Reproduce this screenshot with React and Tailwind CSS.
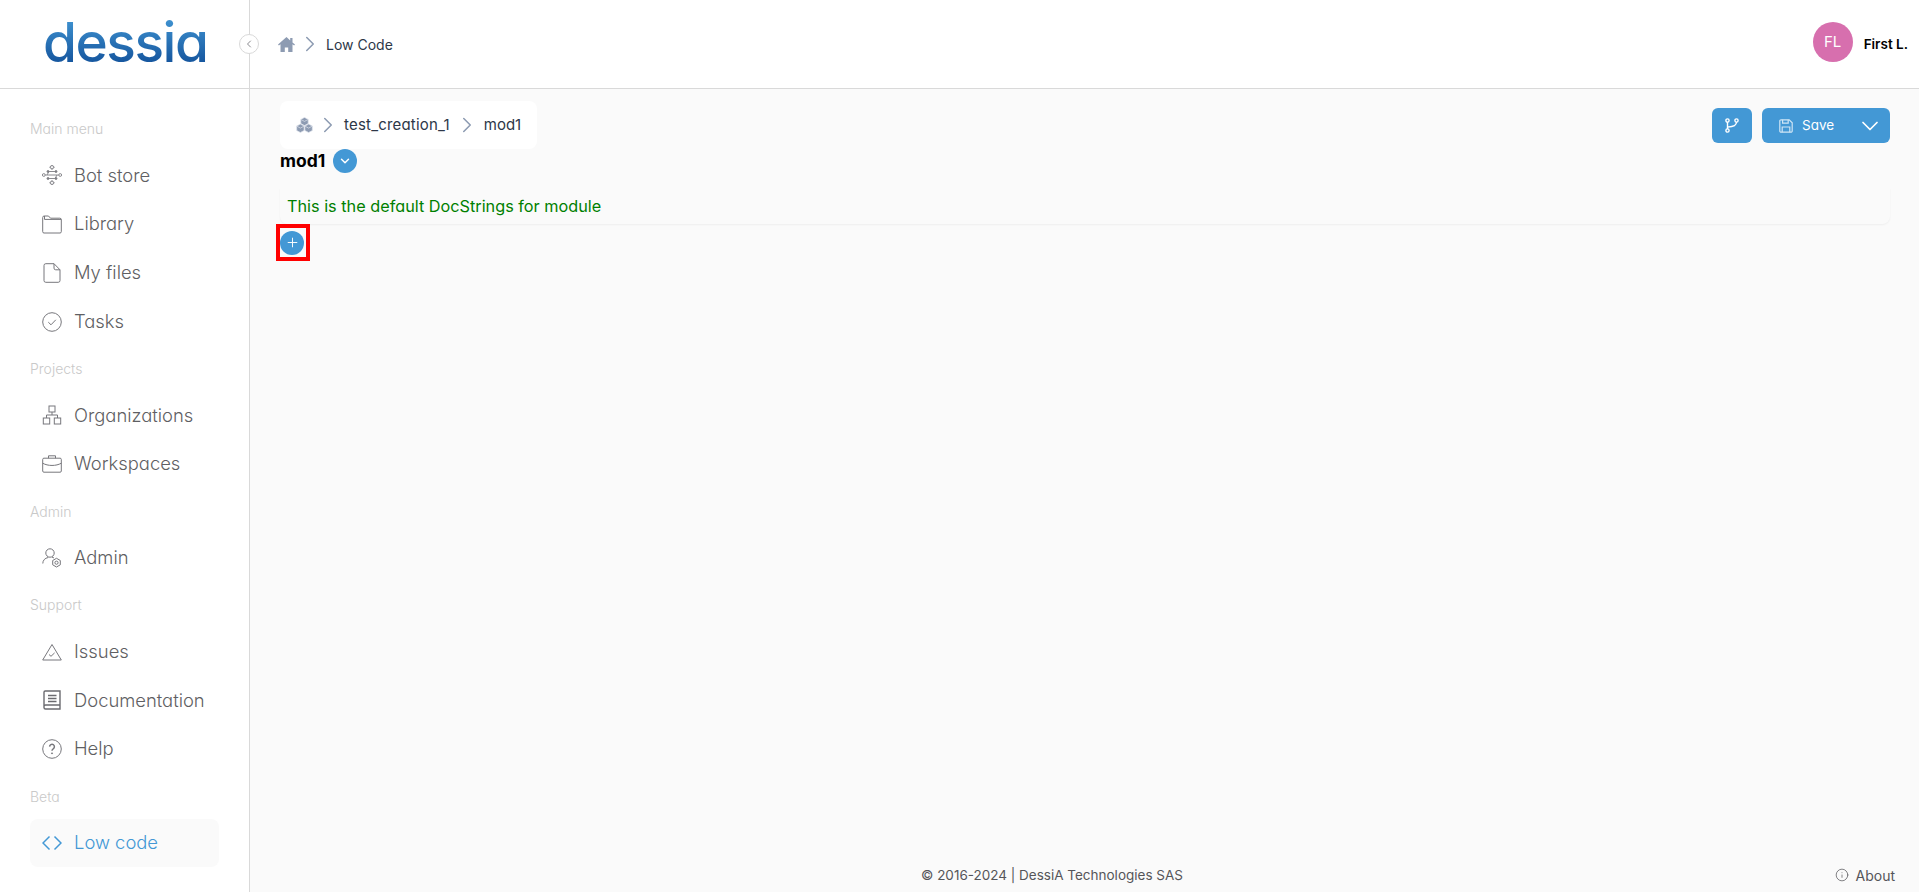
import { ChevronLeft, ChevronRight, ChevronDown, Plus, Info } from 'lucide-react';

// sidebar icons, all on a 20x20 box
const BotStore = () => (
    <svg width="20" height="20" viewBox="0 0 20 20" fill="none" stroke="#8a8a8f" strokeWidth="1">
        <rect x="8.5" y="0.7" width="3" height="3" transform="rotate(45 10 2.2)" />
        <rect x="8.5" y="16.3" width="3" height="3" transform="rotate(45 10 17.8)" />
        <circle cx="1.8" cy="10" r="1.4" />
        <circle cx="18.2" cy="10" r="1.4" />
        <path d="M3.2 10h13.6M6 6.5h8M6 13.5h8M7 6.5 5 10M13 13.5l2-3.5" />
        <circle cx="6" cy="6.5" r="1" fill="#6b6b70" />
        <circle cx="14" cy="6.5" r="1" fill="#6b6b70" />
        <circle cx="6" cy="13.5" r="1" fill="#6b6b70" />
        <circle cx="14" cy="13.5" r="1" fill="#6b6b70" />
    </svg>
);
const Folder = () => (
    <svg width="20" height="20" viewBox="0 0 20 20" fill="none" stroke="#77777c" strokeWidth="1">
        <path d="M.7 3.5A1.5 1.5 0 0 1 2.2 2h4.3l2 2.2h9.3a1.5 1.5 0 0 1 1.5 1.5v12a1.3 1.3 0 0 1-1.3 1.3H2a1.3 1.3 0 0 1-1.3-1.3z" />
        <path d="M2.5 2v3.4h16.8" />
    </svg>
);
const FileIcon = () => (
    <svg width="20" height="20" viewBox="0 0 20 20" fill="none" stroke="#77777c" strokeWidth="1">
        <path d="M2 2.5A1.8 1.8 0 0 1 3.8.7h8.2L18 6.8v10.7a1.8 1.8 0 0 1-1.8 1.8H3.8A1.8 1.8 0 0 1 2 17.5z" />
        <path d="M12 .7v4.4a1.7 1.7 0 0 0 1.7 1.7H18" />
    </svg>
);
const Tasks = () => (
    <svg width="20" height="20" viewBox="0 0 20 20" fill="none" stroke="#77777c" strokeWidth="1">
        <circle cx="10" cy="10" r="9.3" />
        <path d="m6.3 10.2 2.7 2.6 4.8-5" />
    </svg>
);
const Org = () => (
    <svg width="20" height="20" viewBox="0 0 20 20" fill="none" stroke="#77777c" strokeWidth="1">
        <rect x="7" y="1" width="6" height="6" />
        <rect x="1.3" y="13" width="6.4" height="6" />
        <rect x="12.3" y="13" width="6.4" height="6" />
        <path d="M10 7v3M4.5 13v-3h11v3" />
    </svg>
);
const Briefcase = () => (
    <svg width="20" height="20" viewBox="0 0 20 20" fill="none" stroke="#77777c" strokeWidth="1">
        <rect x=".7" y="4.2" width="18.6" height="14" rx="1.2" />
        <path d="M6.5 4.2V1.8h7v2.4M.7 9.2c5 3 13.6 3 18.6 0" />
    </svg>
);
const AdminIcon = () => (
    <svg width="20" height="20" viewBox="0 0 20 20" fill="none" stroke="#77777c" strokeWidth="1">
        <circle cx="8" cy="5" r="4.2" />
        <path d="M.8 15.5c0-3 2-5.5 5.5-6M10 9.2c.8.2 1.4.4 2 .8" />
        <path d="m14.5 10.3 3.8 2.2v4.3l-3.8 2.2-3.8-2.2v-4.3z" />
        <circle cx="14.5" cy="14.7" r="1.6" />
    </svg>
);
const Issues = () => (
    <svg width="20" height="20" viewBox="0 0 20 20" fill="none" stroke="#77777c" strokeWidth="1">
        <path d="M10 2.5 19.3 18H.7z" />
        <path d="m7 12.5 2 1.8 3.6-3.4" />
    </svg>
);
const Book = () => (
    <svg width="20" height="20" viewBox="0 0 20 20" fill="none" stroke="#6b6b70" strokeWidth="1.4">
        <path d="M2 16.5V2.2A1.2 1.2 0 0 1 3.2 1H18v18H3.5A1.5 1.5 0 0 1 2 17.5v-1A1.5 1.5 0 0 1 3.5 15H18" />
        <path d="M6 5.5h8.5M6 8.5h8.5M6 11.5h8.5" />
    </svg>
);
const Help = () => (
    <svg width="20" height="20" viewBox="0 0 20 20" fill="none" stroke="#77777c" strokeWidth="1">
        <circle cx="10" cy="10" r="9.3" />
        <path strokeWidth="1.5" d="M7.6 7.6a2.4 2.4 0 1 1 3.6 2.2c-.8.5-1.2 1-1.2 2" />
        <circle cx="10" cy="14.3" r=".5" fill="#77777c" />
    </svg>
);
const Code = () => (
    <svg width="20" height="20" viewBox="0 0 20 20" fill="none" stroke="#4398d5" strokeWidth="1.5">
        <path d="M7.5 3.5 1 10l6.5 6.5M12.5 3.5 19 10l-6.5 6.5" />
    </svg>
);
const Home = () => (
    <svg width="17" height="15" viewBox="0 0 17 15" fill="#8d9bb2">
        <path d="M8.5 0 0 7.6l.9 1L2.5 7.2V15h4.3v-4.6h3.4V15h4.3V7.2l1.6 1.4.9-1-2.5-2.2V1h-2.3v2.400z" />
    </svg>
);
const Cubes = () => (
    <svg width="17" height="16" viewBox="0 0 17 16" fill="#8d9bb2" stroke="#dfe4ec" strokeWidth=".7">
        <path d="m8.5.4 3.7 2v4.2l-3.7 2-3.7-2V2.4z" />
        <path d="M4.4 7.1l3.7 2v4.4l-3.7 2-3.7-2V9.1z" />
        <path d="M12.6 7.1l3.7 2v4.4l-3.7 2-3.7-2V9.1z" />
        <path d="M4.8 2.4l3.7 2 3.7-2M.7 9.1l3.7 2 3.7-2M8.900 9.100l3.700 2 3.700-2" />
    </svg>
);
const SaveIcon = () => (
    <svg width="14" height="14" viewBox="0 0 14 14" fill="none" stroke="#cfe5f5" strokeWidth="1.2">
        <path d="M.8 2A1.2 1.2 0 0 1 2 .8h8.2l3 3V12a1.2 1.2 0 0 1-1.2 1.2H2A1.2 1.2 0 0 1 .8 12z" />
        <path d="M3.6.8v3.4h5.6V.8M3.2 13.2V8h7.6v5.2" />
    </svg>
);
const Branch = () => (
    <svg width="14" height="15" viewBox="0 0 14 15" fill="none" stroke="#ffffff" strokeWidth="1.4">
        <circle cx="2.5" cy="2.5" r="1.6" />
        <circle cx="11.5" cy="2.5" r="1.6" />
        <circle cx="2.5" cy="12.5" r="1.6" />
        <path d="M2.5 4.1v6.8M11.5 4.1c0 3.4-2.5 4.4-9 5" />
    </svg>
);

const menu = [
    {
        label: 'Main menu',
        items: [
            { name: 'Bot store', icon: BotStore },
            { name: 'Library', icon: Folder },
            { name: 'My files', icon: FileIcon },
            { name: 'Tasks', icon: Tasks },
        ],
    },
    {
        label: 'Projects',
        items: [
            { name: 'Organizations', icon: Org },
            { name: 'Workspaces', icon: Briefcase },
        ],
    },
    { label: 'Admin', items: [{ name: 'Admin', icon: AdminIcon }] },
    {
        label: 'Support',
        items: [
            { name: 'Issues', icon: Issues },
            { name: 'Documentation', icon: Book },
            { name: 'Help', icon: Help },
        ],
    },
    { label: 'Beta', items: [{ name: 'Low code', icon: Code, active: true }] },
];

function Sidebar() {
    return (
        <aside className="flex w-[250px] shrink-0 flex-col border-r border-[#d9d9d9] bg-white">
            {/* Logo */}
            <div className="flex h-[89px] shrink-0 items-center border-b border-[#d9d9d9] pb-[3px] pl-[43px]">
                <span className="bg-gradient-to-b from-[#4398d5] to-[#0f4c96] bg-clip-text text-[55px] leading-none font-medium tracking-[-1.5px] text-transparent">
                    dessia
                </span>
            </div>

            {/* Navigation */}
            <nav className="pt-[17px] pl-[30px]">
                {menu.map((group) => (
                    <div key={group.label}>
                        <div className="flex h-[45px] items-center text-[14px] font-light text-[#c9c9c9]">{group.label}</div>
                        {group.items.map((item) => {
                            const Icon = item.icon;
                            return (
                                <div
                                    key={item.name}
                                    className={`flex h-[48.75px] w-[189px] items-center gap-[12px] rounded-lg pl-[12px] text-[18.4px] font-light ${
                                        item.active ? 'bg-[#fafafa] text-[#4398d5]' : 'text-[#5f5f63]'
                                    }`}
                                >
                                    <Icon />
                                    <span>{item.name}</span>
                                </div>
                            );
                        })}
                    </div>
                ))}
            </nav>
        </aside>
    );
}

function Header() {
    return (
        <header className="relative flex h-[89px] shrink-0 items-center justify-between border-b border-[#d9d9d9] bg-white pr-[11px] pl-[28px]">
            <button className="absolute top-[34px] left-[-11px] flex h-[20px] w-[20px] items-center justify-center rounded-full border border-[#d9d9d9] bg-white text-[#8a8a8f]">
                <ChevronLeft size={12} />
            </button>
            <div className="flex items-center text-[14px] text-[#2d3748]">
                <Home />
                <ChevronRight size={26} strokeWidth={1.4} className="ml-[2px] text-[#8d9bb2]" />
                <span className="ml-[3px]">Low Code</span>
            </div>
            <div className="flex items-center">
                <div className="mb-[4px] flex h-[40px] w-[40px] items-center justify-center rounded-full bg-[#d76fae] text-[15px] text-white">
                    FL
                </div>
                <span className="ml-[11px] text-[13.5px] font-semibold text-black">First L.</span>
            </div>
        </header>
    );
}

function Toolbar() {
    return (
        <div className="flex items-start justify-between">
            <div className="flex h-[48px] items-center rounded-lg bg-white pr-[16px] pl-[16px] text-[15px] text-[#2d3748]">
                <Cubes />
                <ChevronRight size={26} strokeWidth={1.4} className="ml-[2px] text-[#8d9bb2]" />
                <span className="ml-[3px] tracking-[0.2px]">test_creation_1</span>
                <ChevronRight size={26} strokeWidth={1.4} className="ml-[4px] text-[#8d9bb2]" />
                <span className="ml-[4px]">mod1</span>
            </div>
            <div className="mt-[7px] flex gap-[10px]">
                <button className="flex h-[35px] w-[40px] items-center justify-center rounded-md bg-[#4398d5]">
                    <Branch />
                </button>
                <button className="flex h-[35px] w-[128px] items-center rounded-md bg-[#4398d5] pr-[6px] pl-[17px] text-[13.5px] text-white">
                    <SaveIcon />
                    <span className="ml-[9px]">Save</span>
                    <ChevronDown size={28} strokeWidth={1.5} className="ml-auto" />
                </button>
            </div>
        </div>
    );
}

export default function App() {
    return (
        <div className="flex h-screen overflow-hidden bg-[#fafafa] font-['Inter','Noto_Sans',sans-serif] [font-feature-settings:'cv11']">
            <Sidebar />
            <div className="flex min-w-0 flex-1 flex-col">
                <Header />
                <main className="flex flex-1 flex-col pt-[12px] pr-[29px] pl-[30px]">
                    <Toolbar />

                    <div className="flex h-[24px] items-center gap-[8px]">
                        <span className="text-[17.5px] font-bold text-black">mod1</span>
                        <button className="flex h-[24px] w-[24px] items-center justify-center rounded-full bg-[#4398d5] text-white">
                            <ChevronDown size={14} strokeWidth={2.5} />
                        </button>
                    </div>

                    <div className="mt-[15px] flex h-[36px] items-center rounded-b-lg pl-[7px] text-[16.25px] text-[#008000] shadow-[0_1px_2px_rgba(0,0,0,0.05)]">
                        This is the default DocStrings for module
                    </div>

                    {/* Add button with its red highlight */}
                    <div className="-ml-[4px] flex h-[37px] w-[34px] items-center border-4 border-[#ff0000]">
                        <button className="flex h-[24px] w-[24px] items-center justify-center rounded-full bg-[#4398d5] text-white">
                            <Plus size={15} strokeWidth={1.5} />
                        </button>
                    </div>

                    <footer className="relative mt-auto flex h-[34px] items-center pl-[641px] text-[13.5px] text-[#555559]">
                        <span>© 2016-2024 | DessiA Technologies SAS</span>
                        <div className="absolute right-[-5px] flex items-center gap-[7px] text-[14px]">
                            <Info size={14} strokeWidth={1.25} />
                            <span>About</span>
                        </div>
                    </footer>
                </main>
            </div>
        </div>
    );
}
